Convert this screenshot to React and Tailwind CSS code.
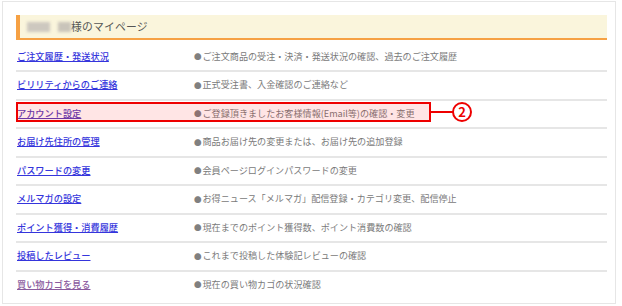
import React from 'react'

const menu = [
  { label: 'ご注文履歴・発送状況', desc: 'ご注文商品の受注・決済・発送状況の確認、過去のご注文履歴' },
  { label: 'ビリリティからのご連絡', desc: '正式受注書、入金確認のご連絡など' },
  { label: 'アカウント設定', desc: 'ご登録頂きましたお客様情報(Email等)の確認・変更', visited: true, mark: true },
  { label: 'お届け先住所の管理', desc: '商品お届け先の変更または、お届け先の追加登録' },
  { label: 'パスワードの変更', desc: '会員ページログインパスワードの変更' },
  { label: 'メルマガの設定', desc: 'お得ニュース「メルマガ」配信登録・カテゴリ変更、配信停止' },
  { label: 'ポイント獲得・消費履歴', desc: '現在までのポイント獲得数、ポイント消費数の確認' },
  { label: '投稿したレビュー', desc: 'これまで投稿した体験記レビューの確認' },
  { label: '買い物カゴを見る', desc: '現在の買い物カゴの状況確認', visited: true },
]

export default function App() {
  return (
    <div
      className="w-[622px] h-[306px] bg-white pt-[1px] pl-[2px]"
      style={{ fontFamily: '"Noto Sans CJK JP", "Noto Sans", sans-serif' }}
    >
      <div className="w-[614px] h-[303px] border border-[#e6e6e6] pt-[13px] pl-[13px] pr-[8px]">
        {/* 見出し */}
        <div className="h-[25px] flex items-center bg-[#faf5dc] border-l-4 border-l-[#f6a144] border-b-2 border-b-[#f6a144] pl-[7px]">
          <div className="w-[23px] h-[10px] bg-[#cdc8bf] blur-[1.5px]" />
          <div className="w-[13px] h-[10px] bg-[#c9c4ba] blur-[1.5px] ml-[8px]" />
          <span className="text-[10.8px] text-[#555] tracking-[0.2px]">様のマイページ</span>
        </div>

        {/* メニュー */}
        <div className="mt-[3.5px]">
          {menu.map((item, i) => (
            <div key={item.label}>
              <div className="relative h-[26.5px] flex items-center">
                <a
                  href="#"
                  className={
                    'w-[178px] pl-[1px] text-[9.2px] font-medium underline underline-offset-[1px] ' +
                    (item.visited ? (item.mark ? 'text-[#5a3cb8]' : 'text-[#8a5a9e]') : 'text-[#3535dc]')
                  }
                >
                  {item.label}
                </a>
                <span className="flex items-center text-[9.1px] text-[#7a7a7a]">
                  <span className="text-[7.5px] text-[#808080] mr-[1px]">●</span>
                  {item.desc}
                </span>
                {item.mark && (
                  <>
                    <div className="absolute left-0 top-[1.5px] w-[415px] h-[20px] border-2 border-[#ee0000] bg-[#ff0000]/10 pointer-events-none" />
                    <div className="absolute left-[415px] top-[10px] w-[22px] h-[2px] bg-[#ee0000]" />
                    <div className="absolute left-[436px] top-[1px] w-[20px] h-[20px] rounded-full border-2 border-[#ee0000] flex items-center justify-center text-[13px] font-bold leading-none text-[#ee0000]">
                      2
                    </div>
                  </>
                )}
              </div>
              {i < menu.length - 1 && <div className="h-[2px] bg-[#e6e6e6]" />}
            </div>
          ))}
        </div>
      </div>
    </div>
  )
}
